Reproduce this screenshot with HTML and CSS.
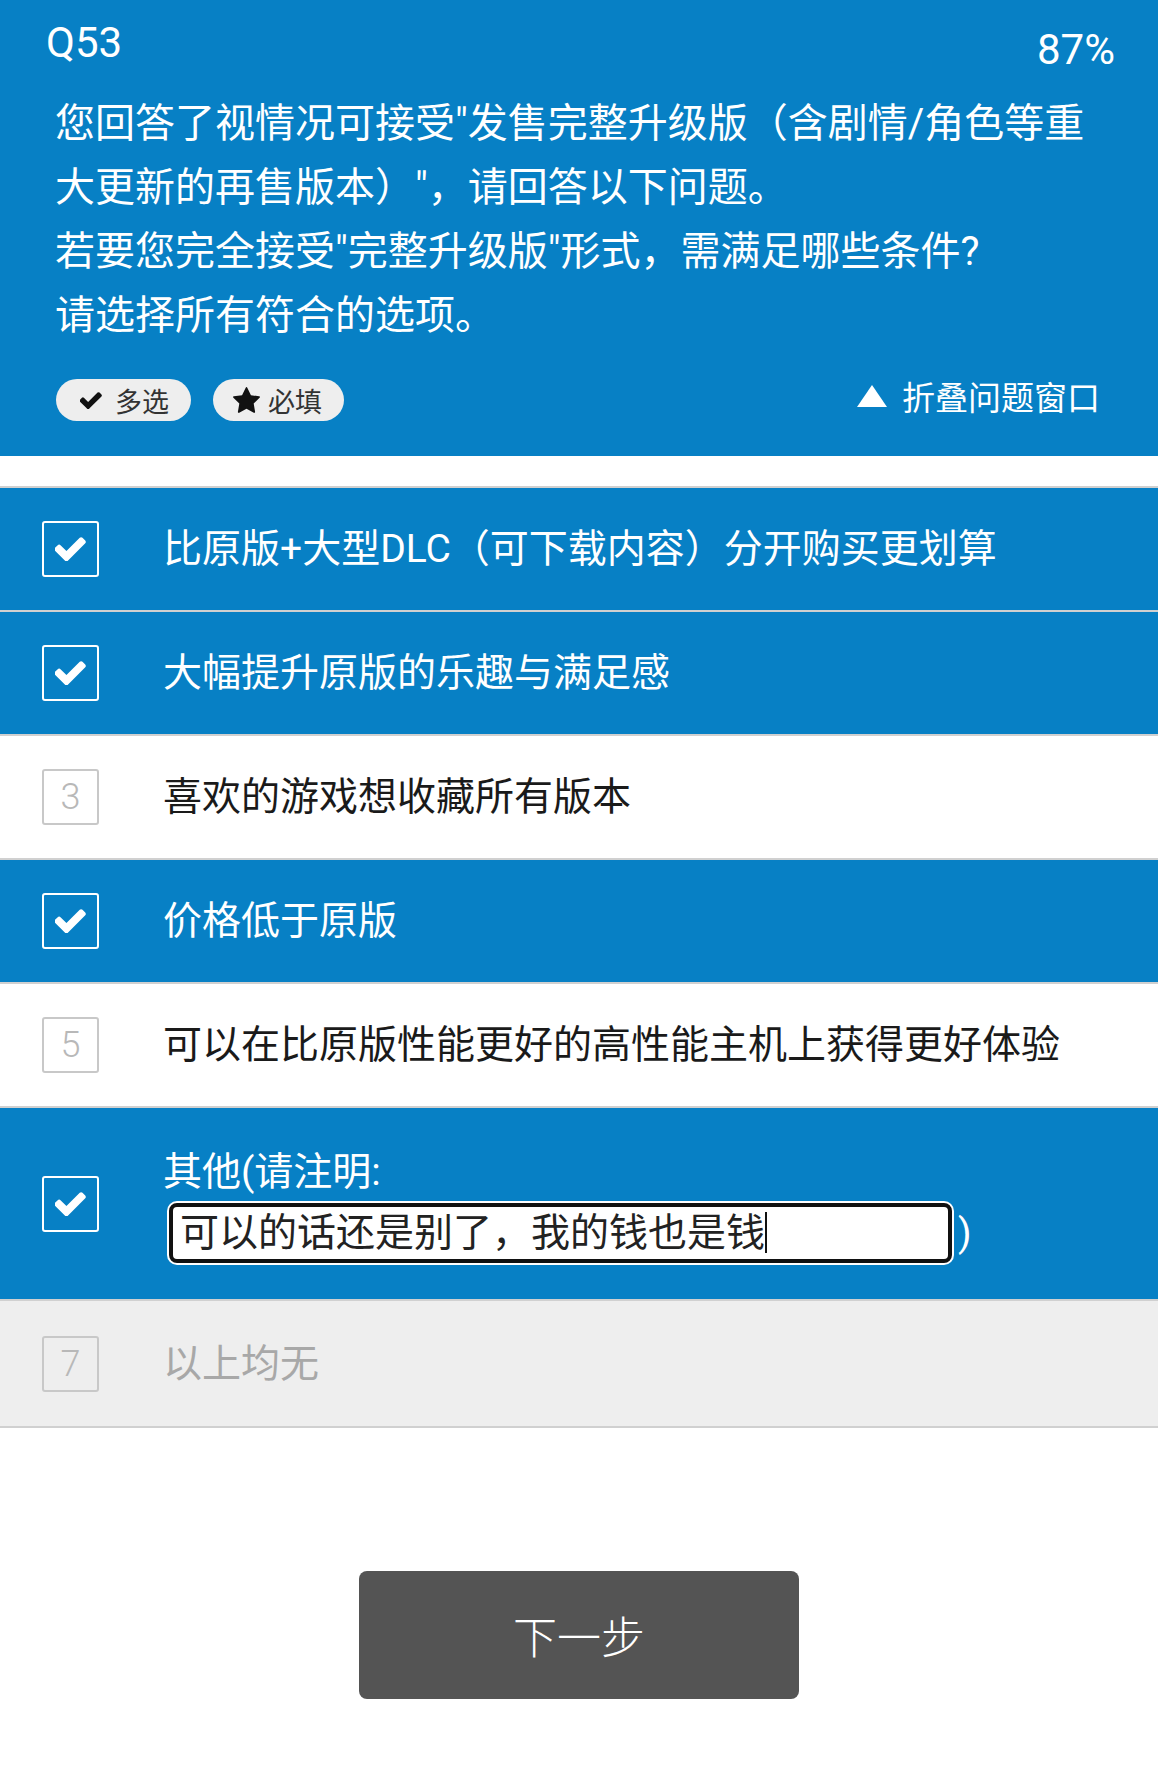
FILE: index.html
```html
<!DOCTYPE html>
<html lang="zh-CN">
<head>
    <meta charset="UTF-8">
    <meta name="viewport" content="width=device-width, initial-scale=1.0">
    <title>Q53</title>
    <link rel="stylesheet" href="styles.css">
</head>
<body>

    <div class="header">
        <div class="top">
            <span class="qno">Q53</span>
            <span class="progress">87%</span>
        </div>
        <div class="question">您回答了视情况可接受"发售完整升级版（含剧情/角色等重大更新的再售版本）"，请回答以下问题。<br>若要您完全接受"完整升级版"形式，需满足哪些条件?<br>请选择所有符合的选项。</div>
        <div class="meta">
            <span class="tag">
                <svg class="tag-icon" width="22" height="17" viewBox="150 330 1530 1170"><path d="M1671 566q0 40-28 68l-724 724-136 136q-28 28-68 28t-68-28l-136-136-362-362q-28-28-28-68t28-68l136-136q28-28 68-28t68 28l294 295 656-657q28-28 68-28t68 28l136 136q28 28 28 68z" fill="#111"/></svg>
                多选
            </span>
            <span class="tag star">
                <svg class="tag-icon" width="27" height="26" viewBox="64 32 1664 1588"><path d="M1728 647q0 22-26 48l-363 354 86 500q1 7 1 20 0 21-10.5 35.5t-30.5 14.5q-19 0-40-12l-449-236-449 236q-22 12-40 12-21 0-31.5-14.5t-10.5-35.5q0-6 2-20l86-500-364-354q-25-27-25-48 0-37 56-46l502-73 225-455q19-41 49-41t49 41l225 455 502 73q56 9 56 46z" fill="#111"/></svg>
                必填
            </span>
            <span class="collapse">
                <svg width="30" height="22" viewBox="0 0 30 22"><polygon points="15,0 30,22 0,22" fill="#fff"/></svg>
                折叠问题窗口
            </span>
        </div>
    </div>

    <div class="options">
        <div class="option checked">
            <span class="box"><svg width="31" height="24" viewBox="150 330 1530 1170"><path d="M1671 566q0 40-28 68l-724 724-136 136q-28 28-68 28t-68-28l-136-136-362-362q-28-28-28-68t28-68l136-136q28-28 68-28t68 28l294 295 656-657q28-28 68-28t68 28l136 136q28 28 28 68z" fill="#fff"/></svg></span>
            <span class="label">比原版+大型DLC（可下载内容）分开购买更划算</span>
        </div>
        <div class="option checked">
            <span class="box"><svg width="31" height="24" viewBox="150 330 1530 1170"><path d="M1671 566q0 40-28 68l-724 724-136 136q-28 28-68 28t-68-28l-136-136-362-362q-28-28-28-68t28-68l136-136q28-28 68-28t68 28l294 295 656-657q28-28 68-28t68 28l136 136q28 28 28 68z" fill="#fff"/></svg></span>
            <span class="label">大幅提升原版的乐趣与满足感</span>
        </div>
        <div class="option">
            <span class="box">3</span>
            <span class="label">喜欢的游戏想收藏所有版本</span>
        </div>
        <div class="option checked">
            <span class="box"><svg width="31" height="24" viewBox="150 330 1530 1170"><path d="M1671 566q0 40-28 68l-724 724-136 136q-28 28-68 28t-68-28l-136-136-362-362q-28-28-28-68t28-68l136-136q28-28 68-28t68 28l294 295 656-657q28-28 68-28t68 28l136 136q28 28 28 68z" fill="#fff"/></svg></span>
            <span class="label">价格低于原版</span>
        </div>
        <div class="option">
            <span class="box">5</span>
            <span class="label">可以在比原版性能更好的高性能主机上获得更好体验</span>
        </div>
        <div class="option checked other">
            <span class="box"><svg width="31" height="24" viewBox="150 330 1530 1170"><path d="M1671 566q0 40-28 68l-724 724-136 136q-28 28-68 28t-68-28l-136-136-362-362q-28-28-28-68t28-68l136-136q28-28 68-28t68 28l294 295 656-657q28-28 68-28t68 28l136 136q28 28 28 68z" fill="#fff"/></svg></span>
            <div class="label">
                <div>其他(请注明:</div>
                <div class="specify">
                    <div class="field">可以的话还是别了，我的钱也是钱<span class="caret"></span></div>
                    <span class="paren">)</span>
                </div>
            </div>
        </div>
        <div class="option disabled">
            <span class="box">7</span>
            <span class="label">以上均无</span>
        </div>
    </div>

    <div class="actions">
        <button type="button" class="next">下一步</button>
    </div>

</body>
</html>
```

FILE: styles.css
```css
body {
    margin: 0;
    font-family: Roboto, "Noto Sans CJK SC", sans-serif;
    background-color: #fff;
    color: #1a1a1a;
}

.header {
    background-color: #0780c5;
    color: #fff;
    padding: 18px 43px 35px 46px;
}

.top {
    display: flex;
    justify-content: space-between;
    align-items: flex-start;
    font-size: 42px;
    line-height: 50px;
}

.progress {
    margin-top: 7px;
}

.question {
    margin: 17px 15px 0 9px;
    font-size: 40px;
    line-height: 64px;
}

.meta {
    display: flex;
    align-items: center;
    height: 42px;
    margin: 31px 15px 0 10px;
}

.tag {
    display: flex;
    align-items: center;
    gap: 13px;
    height: 42px;
    padding: 0 22px 0 24px;
    margin-right: 22px;
    border-radius: 21px;
    background-color: #eeeeee;
    color: #333;
    font-size: 27px;
}

.tag.star {
    gap: 8px;
    padding-left: 20px;
}

.collapse {
    margin-left: auto;
    margin-bottom: 8px;
    display: flex;
    align-items: center;
    gap: 15px;
    font-size: 33px;
}

.options {
    margin-top: 30px;
    border-top: 2px solid #d0d0d0;
}

.option {
    display: flex;
    align-items: center;
    min-height: 122px;
    border-bottom: 2px solid #d0d0d0;
    font-size: 39px;
    line-height: 52px;
}

.option.checked {
    background-color: #0780c5;
    color: #fff;
}

.option.disabled {
    min-height: 125px;
    background-color: #eeeeee;
    color: #a8a8a8;
}

.box {
    flex: none;
    display: flex;
    align-items: center;
    justify-content: center;
    width: 53px;
    height: 52px;
    margin: 0 64px 0 42px;
    border: 2px solid #c8c8c8;
    border-radius: 3px;
    font-family: Roboto, sans-serif;
    font-weight: 300;
    font-size: 36px;
    line-height: 1;
    color: #b8b8b8;
}

.checked .box {
    border-color: #fff;
}

.option.other {
    padding: 35px 0 34px;
}

.specify {
    display: flex;
    align-items: center;
    margin-top: 5px;
}

.field {
    box-sizing: border-box;
    width: 783px;
    height: 60px;
    margin-left: 6px;
    padding-left: 7px;
    border: 4px solid #111;
    border-radius: 8px;
    box-shadow: 0 0 0 2px #fff;
    background-color: #fff;
    color: #222;
    font-size: 39px;
    line-height: 52px;
    display: flex;
    align-items: center;
}

.caret {
    display: inline-block;
    width: 2px;
    height: 41px;
    background-color: #111;
}

.paren {
    margin-left: 6px;
}

.actions {
    display: flex;
    justify-content: center;
    margin-top: 143px;
}

.next {
    width: 440px;
    height: 128px;
    border: none;
    border-radius: 8px;
    background-color: #545454;
    color: #fff;
    font-family: "Noto Sans CJK SC", sans-serif;
    font-size: 44px;
    font-weight: 300;
    cursor: pointer;
}
```
